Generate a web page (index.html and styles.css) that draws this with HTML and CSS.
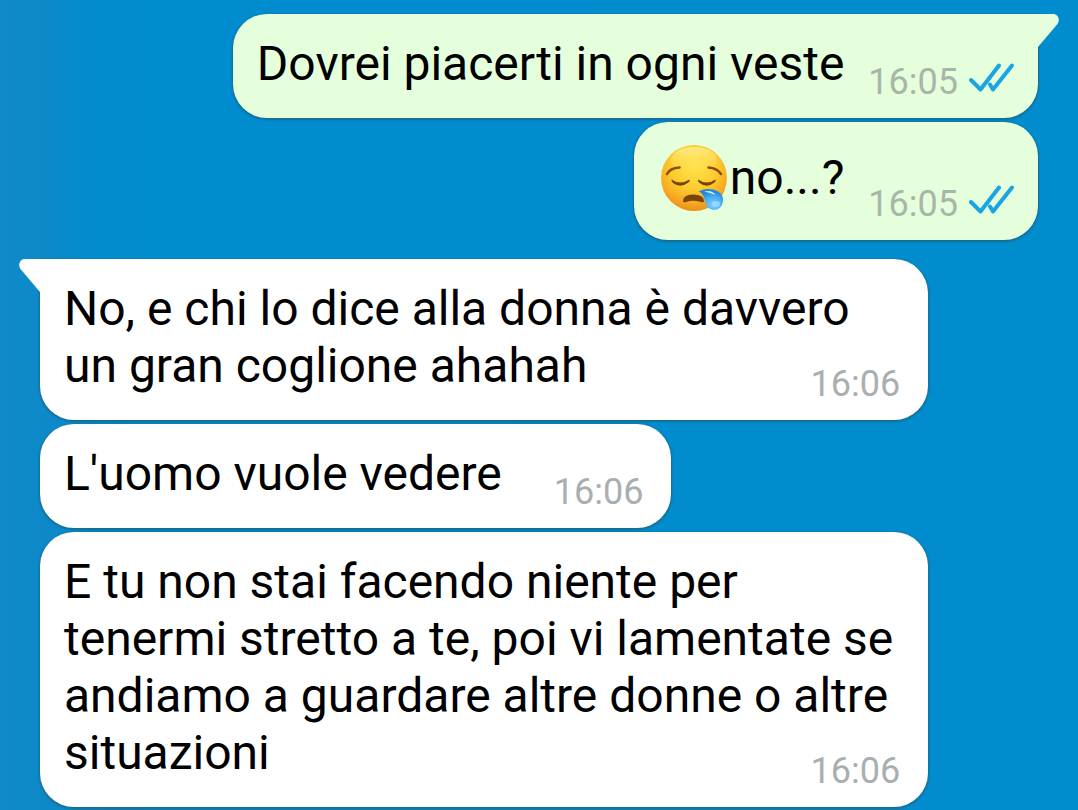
FILE: index.html
```html
<!DOCTYPE html>
<html lang="it">
<head>
    <meta charset="UTF-8">
    <meta name="viewport" content="width=device-width, initial-scale=1.0">
    <title>Chat</title>
    <link rel="stylesheet" href="styles.css">
</head>
<body>

<main class="chat">
    <section class="group outgoing">
        <div class="bubble first">
            <svg class="tail" viewBox="0 0 21 34" aria-hidden="true">
                <path d="M0 0H15C20 0 22.500 5.500 19.500 10L0 33Z"/>
            </svg>
            Dovrei piacerti in ogni veste
            <span class="meta">
                <time>16:05</time>
                <svg class="ticks" viewBox="0 0 45 30" aria-hidden="true">
                    <path d="M2 17L11.500 26.500L30 2.500M21 21.500L24 26.500L43 2.500"/>
                </svg>
            </span>
        </div>
        <div class="bubble with-emoji">
            <svg class="emoji" viewBox="0 0 66 66" role="img" aria-label="faccina assonnata">
                <defs>
                    <radialGradient id="face" cx="50%" cy="32%" r="70%">
                        <stop offset="0" stop-color="#ffe34d"/>
                        <stop offset="0.500" stop-color="#fdcb2f"/>
                        <stop offset="0.800" stop-color="#f6a91f"/>
                        <stop offset="1" stop-color="#e88a1c"/>
                    </radialGradient>
                    <linearGradient id="shine" x1="0" y1="0" x2="0" y2="1">
                        <stop offset="0" stop-color="#fff6a8" stop-opacity="0.700"/>
                        <stop offset="1" stop-color="#ffe34d" stop-opacity="0"/>
                    </linearGradient>
                    <radialGradient id="drop" cx="60%" cy="75%" r="65%">
                        <stop offset="0" stop-color="#7fd0ff"/>
                        <stop offset="0.600" stop-color="#45aef2"/>
                        <stop offset="1" stop-color="#2186d8"/>
                    </radialGradient>
                </defs>
                <circle cx="33" cy="33" r="33" fill="url(#face)"/>
                <ellipse cx="33" cy="15" rx="23" ry="13" fill="url(#shine)"/>
                <g fill="none" stroke="#8a4d0b" stroke-width="2.500" stroke-linecap="round">
                    <path d="M6 29Q9 23 18.500 22.500"/>
                    <path d="M47.500 22.500Q56 23 60 29"/>
                </g>
                <g fill="#7a430a">
                    <path d="M10.500 34.500Q19 40.500 28.500 34.500Q29.500 35.500 27.500 37.500Q19.500 43.500 12 38Q10 36 10.500 34.500Z"/>
                    <path d="M37 34.500Q46 40.500 54.500 34.500Q55.500 35.500 53.500 37.500Q46 43.500 38.500 38Q36.500 36 37 34.500Z"/>
                    <path d="M22 56Q22 49.500 32 49.500Q43 49.500 43 56Q43 58 40 57Q32 54.500 25 57Q22 58 22 56Z"/>
                </g>
                <path d="M37.500 46.500Q47 42 56 46C62 48.500 63 54 61.500 58.500C59.500 65 52 67 47 62.500C42.500 58 45.500 49.500 37.500 46.500Z" fill="url(#drop)"/>
                <path d="M43 46.500Q51 44.500 54.500 50Q49 47.500 43 46.500Z" fill="#c9edff"/>
                <ellipse cx="55" cy="59" rx="4" ry="3" fill="#a5e0ff" opacity="0.700"/>
            </svg>no...?
            <span class="meta">
                <time>16:05</time>
                <svg class="ticks" viewBox="0 0 45 30" aria-hidden="true">
                    <path d="M2 17L11.500 26.500L30 2.500M21 21.500L24 26.500L43 2.500"/>
                </svg>
            </span>
        </div>
    </section>

    <section class="group incoming">
        <div class="bubble first">
            <svg class="tail" viewBox="0 0 21 34" aria-hidden="true">
                <path d="M21 0H6C1 0 -1.500 5.500 1.500 10L21 33Z"/>
            </svg>
            No, e chi lo dice alla donna è davvero un gran coglione ahahah
            <span class="meta"><time>16:06</time></span>
        </div>
        <div class="bubble">
            L'uomo vuole vedere
            <span class="meta"><time>16:06</time></span>
        </div>
        <div class="bubble">
            E tu non stai facendo niente per tenermi stretto a te, poi vi lamentate se andiamo a guardare altre donne o altre situazioni
            <span class="meta"><time>16:06</time></span>
        </div>
    </section>
</main>

</body>
</html>
```
FILE: styles.css
```css
* {
    box-sizing: border-box;
}
body {
    margin: 0;
    min-height: 100vh;
    font-family: Roboto, sans-serif;
    font-size: 48px;
    line-height: 57px;
    color: #000;
    background: linear-gradient(90deg, #108ac8 0, #0d89c9 50px, #028bce 90px, #008ccf 180px, #018ccd 100%);
}
.chat {
    display: flex;
    flex-direction: column;
    gap: 19px;
    padding: 14px 40px 3px;
}
.group {
    display: flex;
    flex-direction: column;
    gap: 4px;
}
.outgoing {
    align-items: flex-end;
}
.incoming {
    align-items: flex-start;
}
.bubble {
    position: relative;
    display: flow-root;
    max-width: 89%;
    padding: 21px 24px 15px;
    border-radius: 34px;
    background: #fff;
    box-shadow: 0 1px 2px 1px rgba(40, 80, 90, 0.5);
}
.incoming .bubble {
    padding-right: 28px;
}
.outgoing .bubble {
    background: #e5ffdc;
}
.outgoing .first {
    border-top-right-radius: 0;
}
.incoming .first {
    border-top-left-radius: 0;
}
.tail {
    position: absolute;
    top: 0;
    width: 21px;
    height: 34px;
}
.outgoing .tail {
    left: 100%;
    fill: #e5ffdc;
}
.incoming .tail {
    right: 100%;
    fill: #fff;
}
/* time sits at the end of the last line, a little below the text */
.meta {
    float: right;
    display: flex;
    align-items: center;
    gap: 11px;
    margin-top: 26px;
    margin-left: 24px;
    font-size: 36px;
    line-height: 42px;
    color: #a9afb1;
}
.incoming .meta {
    margin-left: 52px;
}
.outgoing .meta {
    color: #a8b5a8;
}
.ticks {
    width: 45px;
    height: 30px;
    margin-bottom: 8px;
    fill: none;
    stroke: #18a5e3;
    stroke-width: 4;
    stroke-linecap: round;
    stroke-linejoin: round;
}
.with-emoji .meta {
    margin-top: 40px;
}
.emoji {
    width: 66px;
    height: 66px;
    margin: 2px 3px 0;
    vertical-align: -17px;
}
```
